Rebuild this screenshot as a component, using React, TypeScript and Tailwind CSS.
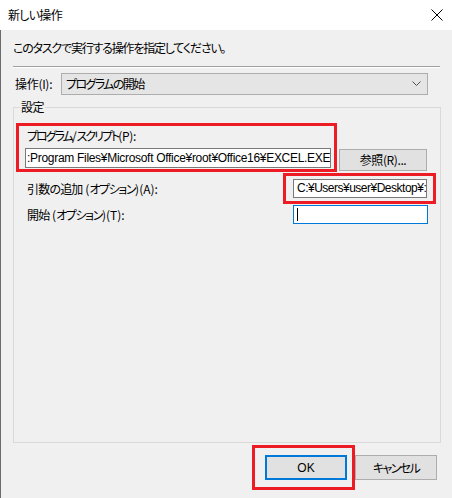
import React from "react";

const jp = "font-['Noto_Sans_CJK_JP',sans-serif] [font-feature-settings:'palt']";
const latin = "font-['Liberation_Sans','Noto_Sans_CJK_JP',sans-serif]";

function RedMark({ className }: { className: string }) {
  // annotation frame drawn over the control
  return <div className={`pointer-events-none absolute border-[3px] border-[#ed1c24] ${className}`} />;
}

function K({ children, t = "tracking-[-1.4px]" }: { children: React.ReactNode; t?: string }) {
  return <span className={t}>{children}</span>;
}

export default function App() {
  return (
    <div className={`w-[452px] h-[498px] flex flex-col bg-[#f0f0f0] text-[12px] text-black ${jp}`}>
      {/* title bar */}
      <div className="h-[30px] bg-white flex items-center justify-between pl-[8px] pr-[9px]">
        <span className="leading-[16px]">
          <K t="tracking-[-0.7px]">新しい操作</K>
        </span>
        <svg width="12" height="12" viewBox="0 0 12 12" className="mb-[1px]">
          <path d="M0.5 0.5 L11.5 11.5 M11.5 0.5 L0.5 11.5" stroke="#000" strokeWidth="1" />
        </svg>
      </div>

      <div className="flex-1 flex flex-col border-l border-[#6b6b6b] pl-[12px] pr-[11px]">
        <div className="mt-[10px] h-[16px] leading-[16px]">
          <K t="tracking-[-1.2px]">このタスクで実行する操作を指定してください。</K>
        </div>

        <div className="mt-[10px] mr-[1px] border-t border-[#a0a0a0] border-b border-b-white" />

        <div className="mt-[5px] h-[22px] flex items-center">
          <span className="w-[48px] pl-[2px] leading-[16px] tracking-[-0.3px]">操作(I):</span>
          <div className="w-[367px] h-[22px] flex items-center justify-between bg-[#e5e5e5] border border-[#adadad] pl-[4px] pr-[6px]">
            <span className="leading-[16px]">
              <K t="tracking-[-1.6px]">プログラムの開始</K>
            </span>
            <svg width="9" height="6" viewBox="0 0 9 6">
              <polyline points="0.5,0.5 4.5,4.5 8.5,0.5" fill="none" stroke="#505050" strokeWidth="1" />
            </svg>
          </div>
        </div>

        <fieldset className="mt-[5px] h-[343px] border border-[#d9d9d9]">
          <legend className="ml-[6px] px-[1px] leading-[14px]">
            <K t="tracking-[-0.5px]">設定</K>
          </legend>

          <div className="mt-[14px] flex items-start">
            <div className="relative ml-[11px] w-[306px]">
              <div className="pl-[2px] h-[16px] leading-[16px] whitespace-nowrap">
                <K t="tracking-[-2px]">プログラム</K>/<K t="tracking-[-2px]">スクリプト</K>
                <K t="tracking-[-0.3px]">(P):</K>
              </div>
              <div
                className={`mt-[4px] h-[20px] bg-white border border-[#7a7a7a] overflow-hidden whitespace-nowrap leading-[18px] pl-[1px] tracking-[-0.3px] ${latin}`}
              >
                :Program Files¥Microsoft Office¥root¥Office16¥EXCEL.EXE
              </div>
              <RedMark className="-left-[9px] -top-[5px] -right-[6px] -bottom-[4px]" />
            </div>
            <button className="mt-[21px] ml-[8px] w-[88px] h-[22px] bg-[#e1e1e1] border border-[#adadad] leading-[16px] tracking-[-0.4px]">
              参照(R)...
            </button>
          </div>

          <div className="mt-[8px] flex items-center justify-between">
            <span className="ml-[13px] leading-[16px] whitespace-nowrap">
              <K t="tracking-[-0.8px]">引数の追加</K> (<K>オプション</K>)(A):
            </span>
            <div className="relative mr-[13px] w-[134px] h-[19px]">
              <div
                className={`h-full bg-white border border-[#7a7a7a] overflow-hidden whitespace-nowrap leading-[17px] pl-[3px] tracking-[-0.5px] ${latin}`}
              >
                C:¥Users¥user¥Desktop¥:
              </div>
              <RedMark className="-left-[10px] -top-[6px] -right-[9px] -bottom-[6px]" />
            </div>
          </div>

          <div className="mt-[7px] flex items-center justify-between">
            <span className="ml-[13px] leading-[16px] whitespace-nowrap">
              <K t="tracking-[-0.8px]">開始</K> (<K>オプション</K>)(T):
            </span>
            <div className="mr-[12px] w-[135px] h-[19px] bg-white border border-[#0078d7] flex items-center pl-[3px]">
              <div className="w-[1px] h-[13px] bg-black" />
            </div>
          </div>
        </fieldset>

        <div className="mt-[12px] mr-[4px] flex justify-end gap-[8px]">
          <div className="relative">
            <button className={`w-[82px] h-[25px] bg-[#e1e1e1] border-2 border-[#0078d7] leading-[16px] ${latin}`}>
              OK
            </button>
            <RedMark className="-left-[13px] -top-[10px] -right-[8px] -bottom-[10px]" />
          </div>
          <button className="w-[82px] h-[25px] bg-[#e1e1e1] border border-[#adadad] leading-[16px]">
            <K t="tracking-[-1.6px]">キャンセル</K>
          </button>
        </div>
      </div>
    </div>
  );
}
